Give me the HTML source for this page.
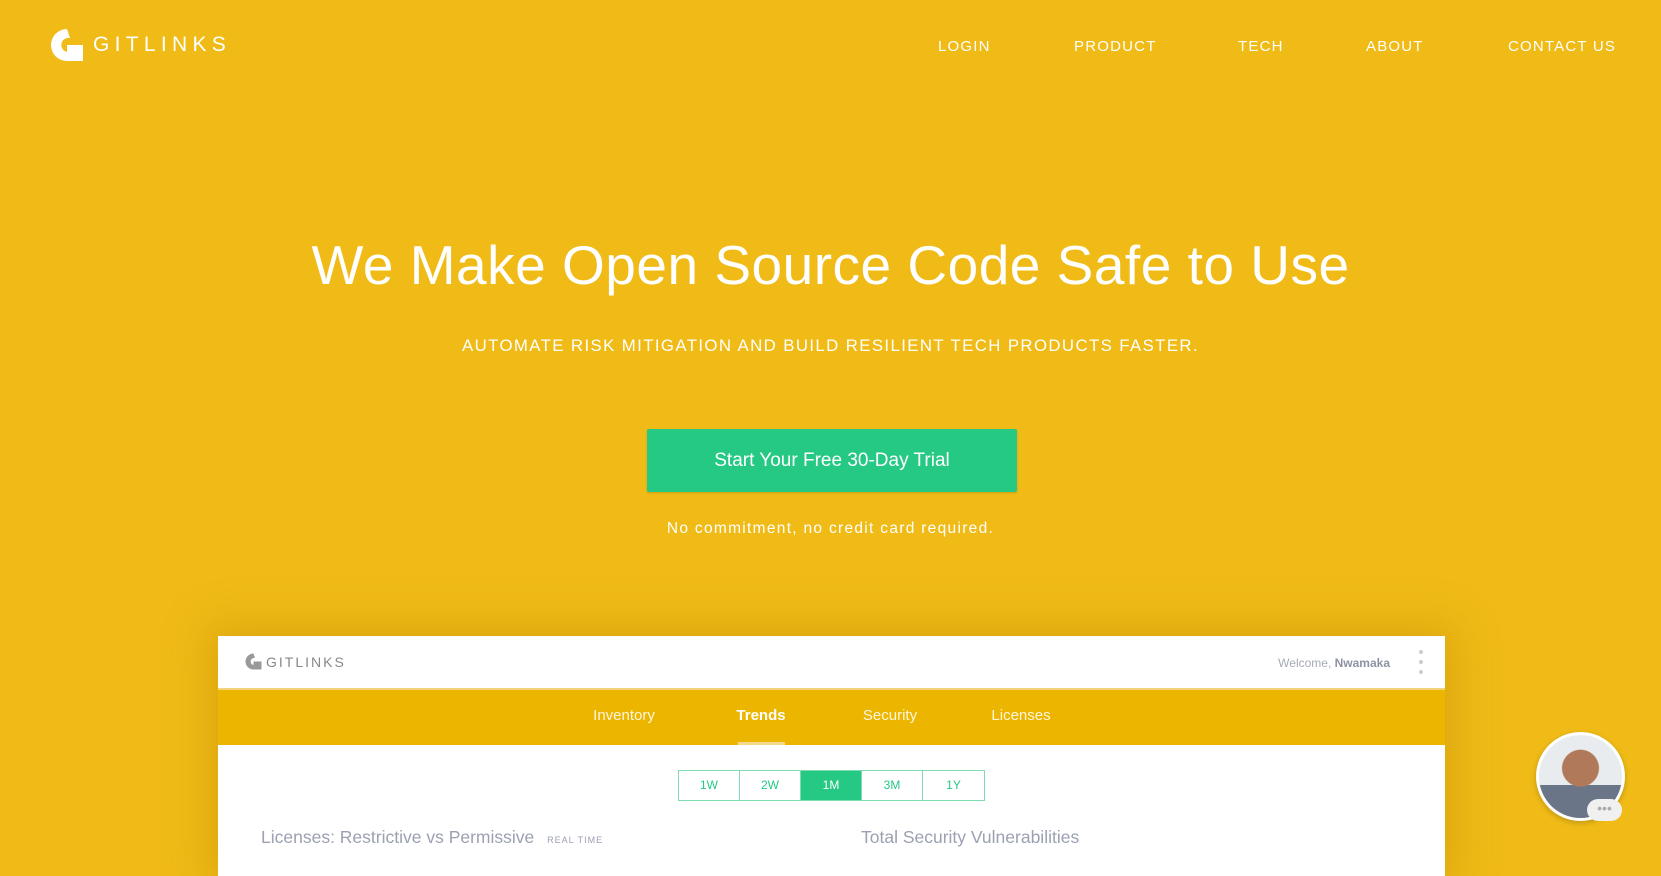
<!DOCTYPE html>
<html><head><meta charset="utf-8"><style>
*{margin:0;padding:0;box-sizing:border-box}
body{width:1661px;height:857px;overflow:hidden;background:#f0bb16;font-family:"Liberation Sans",sans-serif;position:relative;color:#fff}
.abs{position:absolute}
.nav a{position:absolute;top:38px;font-size:15px;letter-spacing:1.2px;color:#fff}
h1{position:absolute;top:233px;left:0;width:1661px;text-align:center;font-weight:400;font-size:55px;letter-spacing:0.5px}
.sub{top:336px;left:0;width:1661px;text-align:center;font-size:16.8px;letter-spacing:1.4px}
.btn{left:647px;top:429px;width:370px;height:63px;background:#26c984;border-radius:2px;text-align:center;line-height:63px;font-size:19px;box-shadow:0 1px 2px rgba(0,0,0,.15)}
.note{top:520px;left:0;width:1661px;text-align:center;font-size:15.5px;letter-spacing:1.3px}
.dash{left:218px;top:636px;width:1227px;height:240px;background:#fff;box-shadow:0 0 40px 10px rgba(180,130,0,.35)}
.hdr{height:54px;border-bottom:2px solid #f3d27a}
.band{height:55px;background:#ecb500;position:relative}
.band span{position:absolute;top:17px;font-size:15px;color:#fff6dc;transform:translateX(-50%)}
.per{position:absolute;left:460px;top:134px;display:flex;border:1px solid #7fdcb0}
.per div{width:61px;height:29px;line-height:29px;text-align:center;font-size:12px;color:#26c984;border-right:1px solid #7fdcb0}
.per div:last-child{border-right:none}
.per .on{background:#26c984;color:#fff}
.t{position:absolute;top:191px;font-size:17.5px;color:#9ba1b2}
</style></head><body>
<svg class="abs" style="left:50px;top:28px" width="34" height="34" viewBox="0 0 34 34"><path d="M17 1 A16 16 0 1 0 17 33 H33 V17 H17 V24 A7 7 0 1 1 20 10 Z" fill="#fff"/></svg>
<div class="abs" style="left:93px;top:33px;font-size:21px;letter-spacing:5.3px">GITLINKS</div>
<div class="nav"><a style="left:938px">LOGIN</a><a style="left:1074px">PRODUCT</a><a style="left:1238px">TECH</a><a style="left:1366px">ABOUT</a><a style="left:1508px">CONTACT US</a></div>
<h1>We Make Open Source Code Safe to Use</h1>
<div class="abs sub">AUTOMATE RISK MITIGATION AND BUILD RESILIENT TECH PRODUCTS FASTER.</div>
<div class="abs btn">Start Your Free 30-Day Trial</div>
<div class="abs note">No commitment, no credit card required.</div>
<div class="abs dash">
 <div class="hdr" style="position:relative">
  <svg class="abs" style="left:27px;top:17px" width="17" height="17" viewBox="0 0 34 34"><path d="M17 1 A16 16 0 1 0 17 33 H33 V17 H17 V24 A7 7 0 1 1 20 10 Z" fill="#999"/></svg>
  <div class="abs" style="left:48px;top:18px;font-size:14px;letter-spacing:2px;color:#888">GITLINKS</div>
  <div class="abs" style="right:55px;top:20px;font-size:12px;color:#a6abb8">Welcome, <b style="color:#8e93a3">Nwamaka</b></div>
  <div class="abs" style="right:22px;top:14px;width:4px;line-height:0">
   <div style="width:4px;height:4px;border-radius:2px;background:#ccc;margin-bottom:6px"></div><div style="width:4px;height:4px;border-radius:2px;background:#ccc;margin-bottom:6px"></div><div style="width:4px;height:4px;border-radius:2px;background:#ccc"></div></div>
 </div>
 <div class="band"><span style="left:406px">Inventory</span><span style="left:543px;color:#fff;font-weight:bold">Trends</span><span style="left:672px">Security</span><span style="left:803px">Licenses</span>
  <div class="abs" style="left:520px;bottom:0;width:47px;height:3px;background:#f5d98a"></div></div>
 <div class="per"><div>1W</div><div>2W</div><div class="on">1M</div><div>3M</div><div>1Y</div></div>
 <div class="t" style="left:43px">Licenses: Restrictive vs Permissive <span style="font-size:9px;letter-spacing:1px;margin-left:8px">REAL TIME</span></div>
 <div class="t" style="left:643px">Total Security Vulnerabilities</div>
</div>
<div class="abs" style="left:1536px;top:732px;width:89px;height:89px;border-radius:50%;background:#fff;padding:3px;box-shadow:0 2px 6px rgba(0,0,0,.2)">
 <div style="width:83px;height:83px;border-radius:50%;background:radial-gradient(circle at 50% 40%,#b07a5a 0 18px,transparent 19px),linear-gradient(#e8ecef 0 60%,#6a7588 60%)"></div></div>
<div class="abs" style="left:1587px;top:799px;width:35px;height:22px;border-radius:11px;background:#f0f0f0;text-align:center;font-size:14px;line-height:18px;color:#aaa">•••</div>
</body></html>
